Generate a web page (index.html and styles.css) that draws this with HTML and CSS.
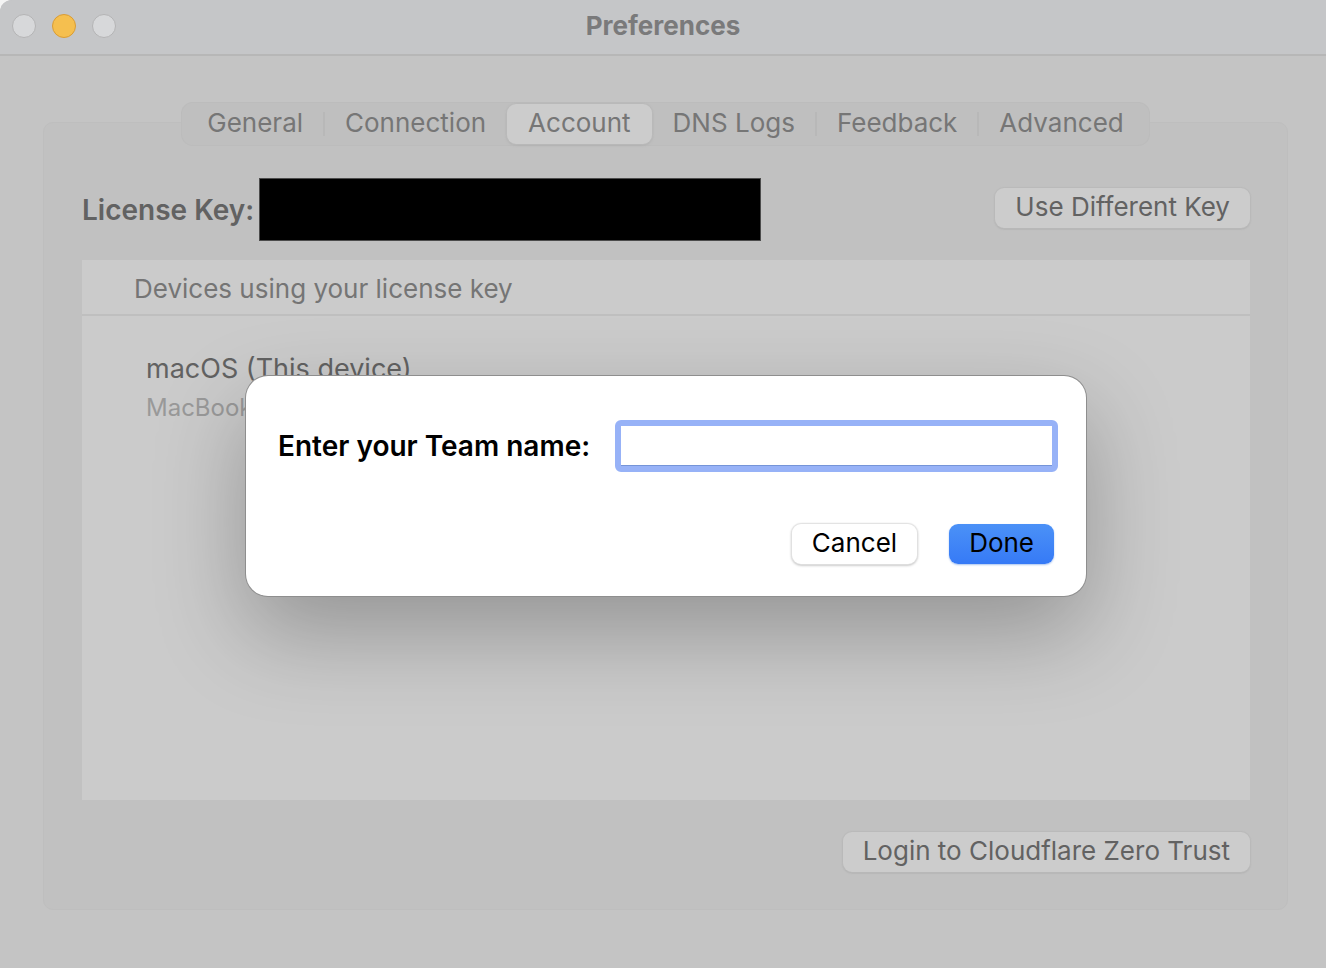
FILE: index.html
```html
<!DOCTYPE html>
<html lang="en">
<head>
<meta charset="utf-8">
<title>Preferences</title>
<link rel="stylesheet" href="styles.css">
</head>
<body>
<div class="window">
  <header class="titlebar">
    <div class="lights">
      <button class="light" type="button" aria-label="Close"></button>
      <button class="light light-minimize" type="button" aria-label="Minimize"></button>
      <button class="light" type="button" aria-label="Zoom"></button>
    </div>
    <h1 class="title">Preferences</h1>
  </header>
  <main class="content">
    <nav class="tabs" aria-label="Preference sections">
      <button class="tab" type="button">General</button>
      <button class="tab divided" type="button">Connection</button>
      <button class="tab tab-selected" type="button">Account</button>
      <button class="tab" type="button">DNS Logs</button>
      <button class="tab divided" type="button">Feedback</button>
      <button class="tab divided" type="button">Advanced</button>
    </nav>
    <section class="panel">
      <div class="license">
        <h2 class="license-label">License Key:</h2>
        <div class="redacted"></div>
        <button class="button" type="button">Use Different Key</button>
      </div>
      <div class="devices">
        <h3 class="devices-head">Devices using your license key</h3>
        <div class="device">
          <p class="device-name">macOS (This device)</p>
          <p class="device-model">MacBook</p>
        </div>
      </div>
      <div class="panel-foot">
        <button class="button" type="button">Login to Cloudflare Zero Trust</button>
      </div>
    </section>
  </main>
  <form class="dialog" role="dialog" aria-label="Team name">
    <div class="field">
      <label class="field-label" for="team">Enter your Team name:</label>
      <input class="field-input" id="team" type="text">
    </div>
    <div class="actions">
      <button class="action" type="button">Cancel</button>
      <button class="action action-primary" type="button">Done</button>
    </div>
  </form>
</div>
</body>
</html>
```
FILE: styles.css
```css
* {
  box-sizing: border-box;
}

html {
  background: #f4f4f4;
}

body {
  margin: 0;
  color: #626262;
  font-family: Inter, "Liberation Sans", sans-serif;
  font-size: 26px;
  line-height: 32px;
}

h1, h2, h3, p {
  margin: 0;
  font-size: inherit;
  font-weight: inherit;
}

button, input {
  font: inherit;
  color: inherit;
}

button {
  padding: 0;
  border: 0;
  white-space: nowrap;
}

.window {
  position: relative;
  display: flex;
  flex-direction: column;
  min-height: 100vh;
  border-radius: 12px 0 0 0;
  background: #c4c4c4;
}

.titlebar {
  display: grid;
  grid-template-columns: 1fr auto 1fr;
  align-items: center;
  height: 56px;
  padding: 0 12px 3px;
  border-radius: 12px 0 0 0;
  background: #c5c6c8;
  border-bottom: 2px solid #b7b7b7;
}

.lights {
  display: flex;
  gap: 16px;
}

.light {
  width: 24px;
  height: 24px;
  border: 1px solid #b4b4b5;
  border-radius: 50%;
  background: #d7d8da;
}

.light-minimize {
  border-color: #d99c35;
  background: #f5bf4f;
}

.title {
  font-weight: 700;
  color: #7a7a7b;
}

.content {
  flex: 1;
  display: flex;
  flex-direction: column;
  padding: 46px 38px 58px 43px;
}

.tabs {
  z-index: 1;
  display: flex;
  align-self: center;
  height: 44px;
  padding: 2px;
  margin-bottom: -24px;
  border-radius: 12px;
  background: #bfbfbf;
  box-shadow: inset 0 0 0 1px #bcbcbc;
}

.tab {
  position: relative;
  padding: 0 21px 2px;
  border-radius: 9px;
  background: none;
  color: #767676;
}

.tab:first-child {
  padding-left: 24px;
}

.tab:last-child {
  padding-right: 24px;
}

.tab-selected {
  background: #cccccc;
  box-shadow: 0 0 1px 1px #bababa, 0 1px 3px #a8a8a8;
}

.divided::before {
  content: "";
  position: absolute;
  left: -1px;
  top: 8px;
  bottom: 8px;
  width: 2px;
  background: #b8b8b8;
}

.panel {
  flex: 1;
  display: flex;
  flex-direction: column;
  padding: 55px 37px 37px 38px;
  border: 1px solid #bebebe;
  border-radius: 10px;
  background: #c1c1c1;
}

.license {
  display: flex;
  align-items: center;
  gap: 5px;
  margin-bottom: 19px;
}

.license-label,
.field-label {
  font-size: 28px;
  font-weight: 600;
  white-space: nowrap;
}

.redacted {
  flex: 0 1 502px;
  height: 63px;
  border: 1px solid #4c4c4c;
  background: #000;
}

.button {
  height: 40px;
  margin-left: auto;
  padding: 0 20px 2px;
  border-radius: 9px;
  background: #cccccc;
  box-shadow: 0 0 1px 1px #bababa, 0 1px 2px #a5a5a5;
}

.license .button {
  margin-bottom: 4px;
}

.devices {
  flex: 1;
  background: #cbcbcb;
}

.devices-head {
  padding: 13px 52px 9px;
  border-bottom: 2px solid #bfbfbf;
  color: #757575;
}

.device {
  padding: 37px 64px;
}

.device-name {
  font-size: 27px;
}

.device-model {
  margin-top: 7px;
  font-size: 24px;
  color: #999;
}

.panel-foot {
  display: flex;
  padding-top: 32px;
}

.dialog {
  position: absolute;
  z-index: 2;
  top: 376px;
  left: 50%;
  width: 840px;
  margin-left: -417px;
  padding: 44px 28px 32px 32px;
  border-radius: 22px;
  background: #fff;
  color: #000;
  box-shadow: 0 0 0 1px #8e8e8e, 0 36px 90px rgba(0, 0, 0, 0.27);
}

.field {
  display: flex;
  align-items: center;
  gap: 25px;
}

.field-input {
  flex: 1;
  min-width: 0;
  height: 52px;
  padding: 0 10px;
  border: 6px solid #97b2f7;
  border-radius: 6px;
  outline: none;
  background: #fff;
  box-shadow: inset 0 -1px 0 #7594d8;
}

.actions {
  display: flex;
  justify-content: flex-end;
  gap: 32px;
  padding: 52px 4px 0 0;
}

.action {
  height: 40px;
  padding: 0 20px 2px;
  border-radius: 9px;
  background: #fff;
  box-shadow: 0 0 1px 1px #e2e2e2, 0 1px 3px #999;
}

.action-primary {
  background: linear-gradient(#4b91f7, #367af6);
  box-shadow: 0 1px 2px #a9c4ef;
}
```
